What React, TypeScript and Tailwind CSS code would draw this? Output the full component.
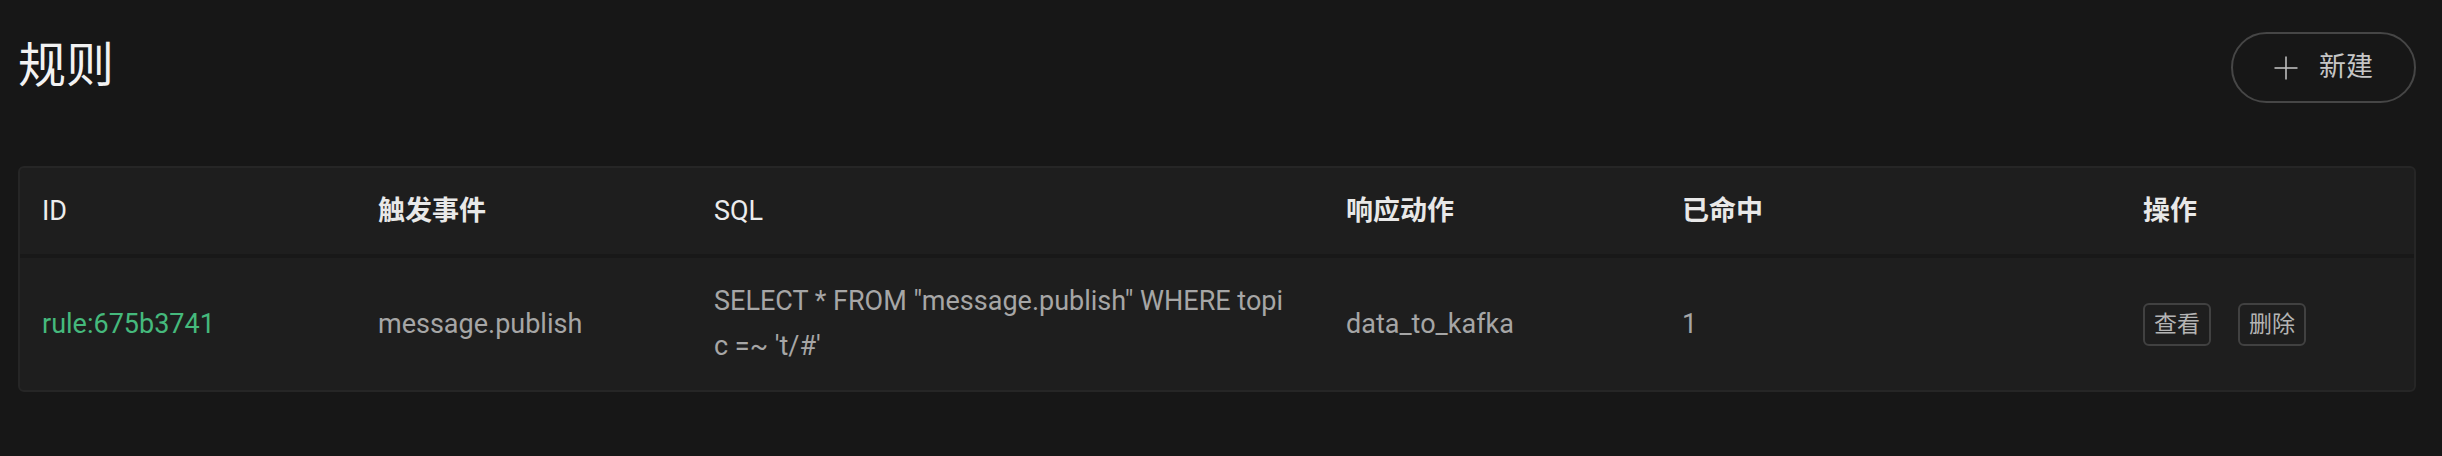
import React from 'react';

const font = { fontFamily: 'Roboto, "Noto Sans CJK SC", sans-serif' };

function PlusIcon() {
    return (
        <svg width="24" height="24" viewBox="0 0 24 24" fill="none" stroke="#bdbdbd" strokeWidth="1.6">
            <line x1="12" y1="0.5" x2="12" y2="23.5" />
            <line x1="0.5" y1="12" x2="23.5" y2="12" />
        </svg>
    );
}

const columns = [
    { label: 'ID', latin: true },
    { label: '触发事件', latin: false },
    { label: 'SQL', latin: true },
    { label: '响应动作', latin: false },
    { label: '已命中', latin: false },
    { label: '操作', latin: false },
];

export default function App() {
    return (
        <div
            className="min-h-[456px] bg-[#171717] pl-[18px] pr-[26px] pt-[32px]"
            style={font}
        >
            {/* Page header */}
            <div className="flex items-center justify-between h-[71px]">
                <h1 className="text-[48px] leading-none text-[#f2f2f2] font-normal -mt-[4px]">规则</h1>
                <button className="h-[71px] w-[185px] rounded-full border-2 border-[#464646] flex items-center justify-center gap-[21px] text-[27px] text-[#c6c6c6]">
                    <PlusIcon />
                    <span>新建</span>
                </button>
            </div>

            {/* Rules table */}
            <div className="mt-[63px] rounded-[6px] border-2 border-[#262626] bg-[#1e1e1e] overflow-hidden">
                <div className="grid grid-cols-[336px_336px_632px_336px_461px_1fr] h-[90px] items-center border-b-4 border-[#181818]">
                    {columns.map((c) => (
                        <div
                            key={c.label}
                            className={
                                c.latin
                                    ? 'pl-[22px] text-[27px] font-normal text-[#ececec]'
                                    : 'pl-[22px] text-[27px] font-semibold text-[#e8e8e8]'
                            }
                        >
                            {c.label}
                        </div>
                    ))}
                </div>
                <div className="grid grid-cols-[336px_336px_632px_336px_461px_1fr] items-center py-[21px] text-[27px] leading-[45px] text-[#a6a6a6]">
                    <div className="pl-[22px] text-[#45b97c]">rule:675b3741</div>
                    <div className="pl-[22px]">message.publish</div>
                    <div className="pl-[22px]">
                        <span className="block">SELECT * FROM "message.publish" WHERE topi</span>
                        <span className="block">c =~ 't/#'</span>
                    </div>
                    <div className="pl-[22px]">data_to_kafka</div>
                    <div className="pl-[22px]">1</div>
                    <div className="pl-[22px] flex items-center gap-[27px]">
                        <button className="h-[43px] px-[9px] rounded-[6px] border-2 border-[#414141] text-[23px] leading-none text-[#b4b4b4]">
                            查看
                        </button>
                        <button className="h-[43px] px-[9px] rounded-[6px] border-2 border-[#414141] text-[23px] leading-none text-[#b4b4b4]">
                            删除
                        </button>
                    </div>
                </div>
            </div>
        </div>
    );
}
